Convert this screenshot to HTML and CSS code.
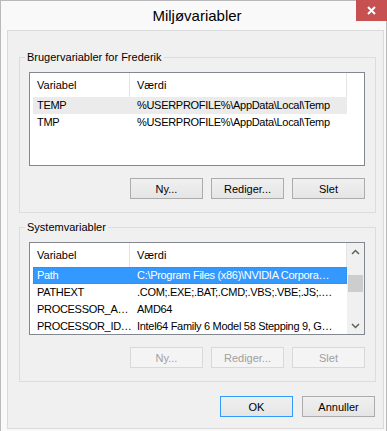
FILE: index.html
```html
<!DOCTYPE html>
<html lang="da">
<head>
  <meta charset="UTF-8">
  <title>Miljøvariabler</title>
  <link rel="stylesheet" href="styles.css">
</head>
<body>

  <div class="window">
    <!-- Title bar -->
    <div class="titlebar">
      <span class="title">Miljøvariabler</span>
      <button class="close-btn" aria-label="Luk">
        <svg width="9" height="9" viewBox="0 0 9 9">
          <path d="M1 1 L8 8 M8 1 L1 8" stroke="#fff" stroke-width="2" fill="none"/>
        </svg>
      </button>
    </div>

    <div class="client">
      <!-- User variables -->
      <fieldset class="group">
        <legend>Brugervariabler for Frederik</legend>
        <div class="list">
          <div class="list-main">
            <div class="list-header">
              <div class="hcell name">Variabel</div>
              <div class="hcell value">Værdi</div>
            </div>
            <div class="row inactive">
              <div class="cell name">TEMP</div>
              <div class="cell value">%USERPROFILE%\AppData\Local\Temp</div>
            </div>
            <div class="row">
              <div class="cell name">TMP</div>
              <div class="cell value">%USERPROFILE%\AppData\Local\Temp</div>
            </div>
          </div>
        </div>
        <div class="btn-row">
          <button class="btn">Ny...</button>
          <button class="btn">Rediger...</button>
          <button class="btn">Slet</button>
        </div>
      </fieldset>

      <!-- System variables -->
      <fieldset class="group second">
        <legend>Systemvariabler</legend>
        <div class="list sys">
          <div class="list-main">
            <div class="list-header">
              <div class="hcell name">Variabel</div>
              <div class="hcell value">Værdi</div>
            </div>
            <div class="row selected">
              <div class="cell name">Path</div>
              <div class="cell value">C:\Program Files (x86)\NVIDIA Corpora…</div>
            </div>
            <div class="row">
              <div class="cell name">PATHEXT</div>
              <div class="cell value">.COM;.EXE;.BAT;.CMD;.VBS;.VBE;.JS;.…</div>
            </div>
            <div class="row">
              <div class="cell name">PROCESSOR_A…</div>
              <div class="cell value">AMD64</div>
            </div>
            <div class="row">
              <div class="cell name">PROCESSOR_ID…</div>
              <div class="cell value">Intel64 Family 6 Model 58 Stepping 9, G…</div>
            </div>
          </div>
          <div class="scrollbar">
            <div class="arrow">
              <svg width="9" height="6" viewBox="0 0 9 6">
                <path d="M1 5 L4.5 1.5 L8 5" stroke="#606060" stroke-width="1.5" fill="none"/>
              </svg>
            </div>
            <div class="track"><div class="thumb"></div></div>
            <div class="arrow">
              <svg width="9" height="6" viewBox="0 0 9 6">
                <path d="M1 1 L4.5 4.5 L8 1" stroke="#606060" stroke-width="1.5" fill="none"/>
              </svg>
            </div>
          </div>
        </div>
        <div class="btn-row">
          <button class="btn" disabled>Ny...</button>
          <button class="btn" disabled>Rediger...</button>
          <button class="btn" disabled>Slet</button>
        </div>
      </fieldset>

      <!-- Dialog buttons -->
      <div class="dialog-buttons">
        <button class="btn default">OK</button>
        <button class="btn">Annuller</button>
      </div>
    </div>
  </div>

</body>
</html>
```

FILE: styles.css
```css
/* General Reset */
* {
  margin: 0;
  padding: 0;
  box-sizing: border-box;
}

body {
  font-family: 'Liberation Sans', Arial, sans-serif;
  font-size: 11px;
  color: #000;
  background-color: #fff;
}

/* Window frame */
.window {
  width: 387px;
  height: 431px;
  border: 1px solid #b9b9b9;
  border-bottom: none;
  background-color: #f9f9f9;
  display: flex;
  flex-direction: column;
}

.titlebar {
  height: 29px;
  display: flex;
  align-items: flex-start;
}

.title {
  flex: 1;
  text-align: center;
  padding-left: 37px;
  font-size: 15px;
  line-height: 29px;
  color: #000;
}

.close-btn {
  width: 31px;
  height: 21px;
  margin-top: -1px;
  margin-right: -1px;
  border: none;
  background-color: #c75050;
  display: flex;
  align-items: center;
  justify-content: center;
}

/* Client area */
.client {
  flex: 1;
  margin: 0 2px 2px 6px;
  border: 1px solid #dadada;
  background-color: #f0f0f0;
  padding: 19px 7px 0 11px;
}

/* Group boxes */
.group {
  border: 1px solid #dcdcdc;
  padding: 8px 10px 13px 9px;
  min-width: 0;
}

.group legend {
  margin-left: -4px;
  padding: 0 2px;
  line-height: 14px;
}

.group.second {
  margin-top: 7px;
}

/* List views */
.list {
  height: 94px;
  border: 1px solid #828790;
  background-color: #fff;
  display: flex;
  overflow: hidden;
}

.list.sys {
  height: 93px;
}

.list-main {
  flex: 1;
  min-width: 0;
}

.list-header {
  display: flex;
  height: 24px;
}

.hcell {
  border-right: 1px solid #e5e5e5;
  padding-left: 7px;
  line-height: 24px;
}

.hcell.name {
  width: 100px;
}

.hcell.value {
  width: 217px;
}

.row {
  display: flex;
  width: 314px;
  height: 17px;
  margin-left: 3px;
  line-height: 17px;
}

.row.inactive {
  background-color: #ebebeb;
}

.row.selected {
  background-color: #3399ff;
  color: #fff;
  outline: 1px dotted #cc6600;
  outline-offset: -1px;
}

.cell {
  white-space: nowrap;
  letter-spacing: -0.3px;
}

.cell.name {
  width: 97px;
  padding-left: 4px;
}

.cell.value {
  width: 217px;
  padding-left: 7px;
  overflow: hidden;
}

/* Scrollbar */
.scrollbar {
  width: 17px;
  background-color: #f0f0f0;
  display: flex;
  flex-direction: column;
}

.arrow {
  height: 17px;
  display: flex;
  align-items: center;
  justify-content: center;
}

.track {
  flex: 1;
}

.thumb {
  height: 17px;
  margin: 15px 1px 0 1px;
  background-color: #cdcdcd;
}

/* Buttons */
.btn-row {
  display: flex;
  justify-content: flex-end;
  gap: 8px;
  margin-top: 12px;
}

.btn {
  width: 73px;
  height: 21px;
  border: 1px solid #acacac;
  background: linear-gradient(#f0f0f0, #e5e5e5);
  font-family: 'Liberation Sans', Arial, sans-serif;
  font-size: 11px;
  color: #000;
}

.btn:disabled {
  border-color: #d9d9d9;
  background: #f4f4f4;
  color: #a0a0a0;
}

.btn.default {
  border-color: #3399ff;
}

.dialog-buttons {
  display: flex;
  justify-content: flex-end;
  gap: 9px;
  margin-top: 14px;
  margin-right: 1px;
}
```
